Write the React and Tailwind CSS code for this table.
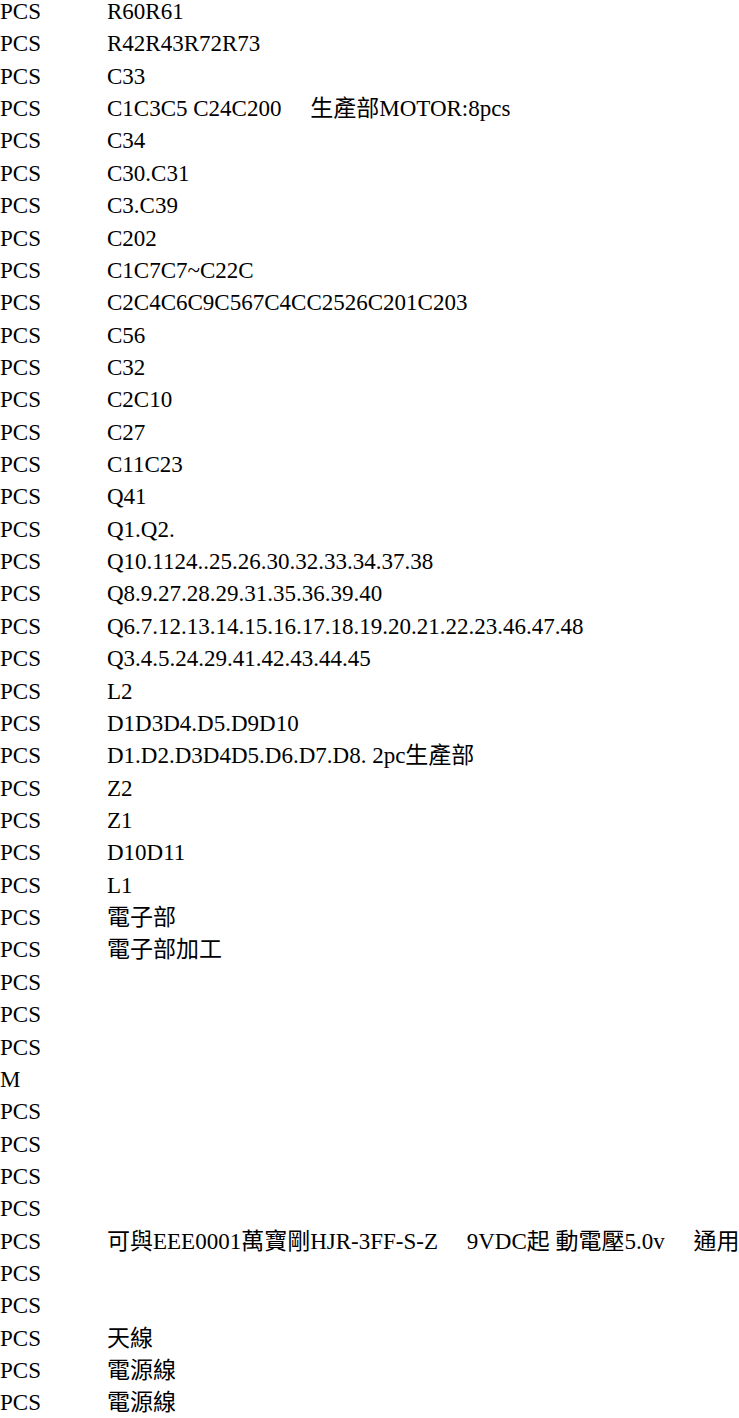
const rows = [
  ["PCS", "R60R61"],
  ["PCS", "R42R43R72R73"],
  ["PCS", "C33"],
  ["PCS", "C1C3C5 C24C200     生產部MOTOR:8pcs"],
  ["PCS", "C34"],
  ["PCS", "C30.C31"],
  ["PCS", "C3.C39"],
  ["PCS", "C202"],
  ["PCS", "C1C7C7~C22C"],
  ["PCS", "C2C4C6C9C567C4CC2526C201C203"],
  ["PCS", "C56"],
  ["PCS", "C32"],
  ["PCS", "C2C10"],
  ["PCS", "C27"],
  ["PCS", "C11C23"],
  ["PCS", "Q41"],
  ["PCS", "Q1.Q2."],
  ["PCS", "Q10.1124..25.26.30.32.33.34.37.38"],
  ["PCS", "Q8.9.27.28.29.31.35.36.39.40"],
  ["PCS", "Q6.7.12.13.14.15.16.17.18.19.20.21.22.23.46.47.48"],
  ["PCS", "Q3.4.5.24.29.41.42.43.44.45"],
  ["PCS", "L2"],
  ["PCS", "D1D3D4.D5.D9D10"],
  ["PCS", "D1.D2.D3D4D5.D6.D7.D8. 2pc生產部"],
  ["PCS", "Z2"],
  ["PCS", "Z1"],
  ["PCS", "D10D11"],
  ["PCS", "L1"],
  ["PCS", "電子部"],
  ["PCS", "電子部加工"],
  ["PCS", ""],
  ["PCS", ""],
  ["PCS", ""],
  ["M", ""],
  ["PCS", ""],
  ["PCS", ""],
  ["PCS", ""],
  ["PCS", ""],
  ["PCS", "可與EEE0001萬寶剛HJR-3FF-S-Z     9VDC起 動電壓5.0v     通用"],
  ["PCS", ""],
  ["PCS", ""],
  ["PCS", "天線"],
  ["PCS", "電源線"],
  ["PCS", "電源線"],
];

export default function App() {
  return (
    <div className="min-h-screen bg-white text-black overflow-hidden font-['Liberation_Serif','Noto_Sans_CJK_TC',serif] text-[23px] pt-px">
      {rows.map(([unit, note], i) => (
        <div key={i} className="grid grid-cols-[107px_1fr] h-[32.37px] leading-[22px] whitespace-pre">
          <span>{unit}</span>
          <span>{note}</span>
        </div>
      ))}
    </div>
  );
}
